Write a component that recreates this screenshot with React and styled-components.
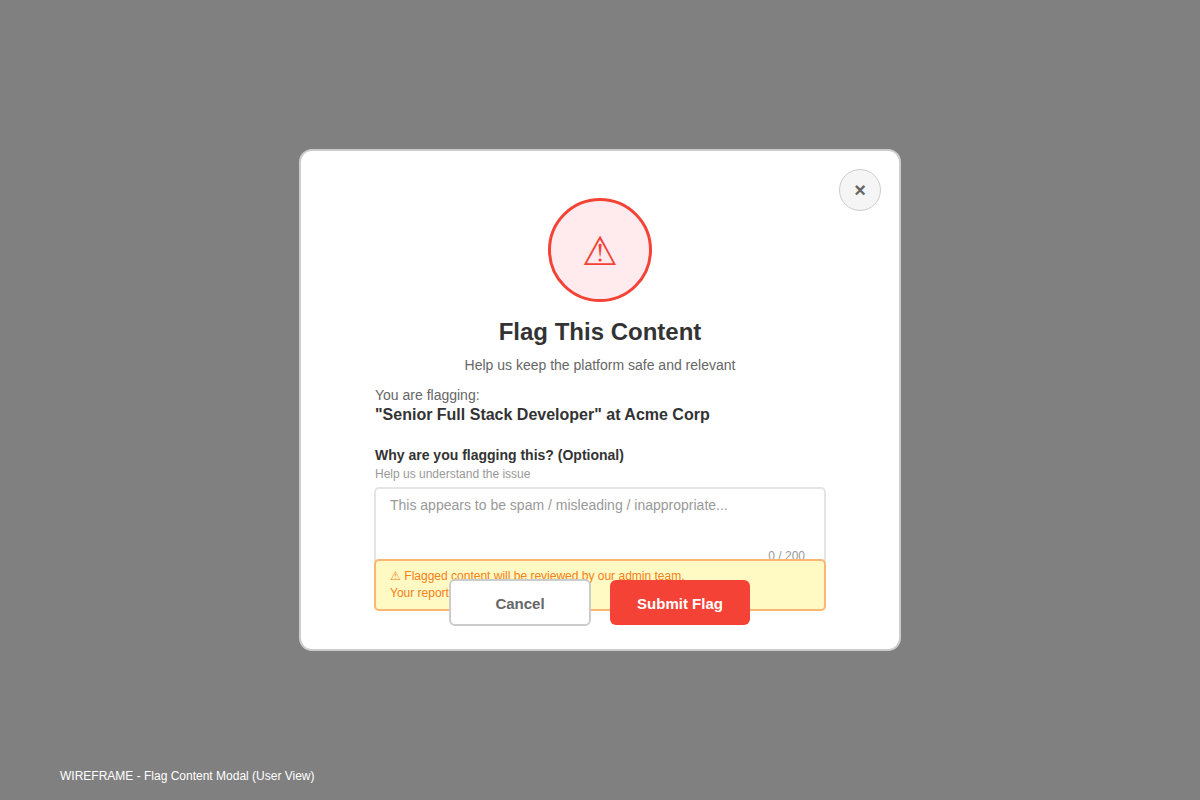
import React from "react";
import styled, { createGlobalStyle } from "styled-components";

const GlobalStyle = createGlobalStyle`
  *, *::before, *::after { box-sizing: border-box; }
  body { margin: 0; background: #808080; font-family: "Liberation Sans", Arial, sans-serif; }
  h1, h2, p { margin: 0; }
  button, textarea { font-family: inherit; }
`;

const Page = styled.div`
  min-height: 100vh;
  display: grid;
  grid-template-rows: 1fr auto 1fr;
  justify-items: center;
`;

const Modal = styled.main`
  grid-row: 2;
  position: relative;
  width: min(602px, 100%);
  padding: 47px 73px 23px;
  background: #fff;
  border: 2px solid #ccc;
  border-radius: 13px;
  display: flex;
  flex-direction: column;
`;

const CloseButton = styled.button`
  position: absolute;
  top: 18px;
  right: 18px;
  width: 42px;
  height: 42px;
  padding: 0;
  border: 1px solid #ccc;
  border-radius: 50%;
  background: #f5f5f5;
  color: #666;
  font-size: 20px;
  font-weight: 700;
  line-height: 40px;
  cursor: pointer;
`;

const AlertBadge = styled.div`
  align-self: center;
  width: 104px;
  height: 104px;
  padding-top: 2px;
  border: 3px solid #f44336;
  border-radius: 50%;
  background: #ffebee;
  color: #f44336;
  font-size: 40px;
  display: grid;
  place-items: center;
`;

const Title = styled.h1`
  margin-top: 16px;
  color: #333;
  font-size: 24px;
  line-height: 28px;
  text-align: center;
`;

const Subtitle = styled.p`
  margin-top: 11px;
  color: #666;
  font-size: 14px;
  line-height: 16px;
  text-align: center;
`;

const Section = styled.section`
  margin-top: ${({ $gap }) => $gap}px;
  padding: 0 1px;
`;

const Caption = styled.p`
  color: #666;
  font-size: 14px;
  line-height: 16px;
`;

const Subject = styled.h2`
  margin-top: 2px;
  color: #333;
  font-size: 16px;
  line-height: 20px;
`;

const Label = styled.label`
  display: block;
  color: #333;
  font-size: 14px;
  font-weight: 700;
  line-height: 16px;
`;

const Hint = styled.p`
  margin-top: 4px;
  color: #999;
  font-size: 12px;
  line-height: 14px;
`;

const Field = styled.div`
  position: relative;
  height: 72px;
  margin-top: 6px;
`;

const ReasonBox = styled.textarea`
  display: block;
  width: 100%;
  height: 82px;
  padding: 8px 14px;
  border: 2px solid #e5e5e5;
  border-radius: 5px;
  background: #fff;
  color: #333;
  font-size: 14px;
  line-height: 16px;
  resize: none;
  outline: none;
  &::placeholder { color: #999; opacity: 1; }
`;

const Counter = styled.span`
  position: absolute;
  right: 21px;
  bottom: -4px;
  color: #999;
  font-size: 12px;
  line-height: 14px;
`;

const Notice = styled.div`
  position: relative;
  height: 52px;
  padding: 7px 14px;
  border: 2px solid #fbb672;
  border-radius: 5px;
  background: #fff9c4;
  color: #f57f17;
  font-size: 12px;
  line-height: 17px;
`;

const Actions = styled.div`
  position: relative;
  display: flex;
  justify-content: center;
  align-items: center;
  gap: 19px;
  margin-top: -32px;
  padding-right: 1px;
`;

const Button = styled.button`
  width: ${({ $primary }) => ($primary ? 140 : 142)}px;
  height: ${({ $primary }) => ($primary ? 45 : 47)}px;
  padding: 2px 0 0;
  border: ${({ $primary }) => ($primary ? "0" : "2px solid #ccc")};
  border-radius: 6px;
  background: ${({ $primary }) => ($primary ? "#f44336" : "#fff")};
  color: ${({ $primary }) => ($primary ? "#fff" : "#666")};
  font-size: 15px;
  font-weight: 700;
  cursor: pointer;
`;

const Footer = styled.footer`
  grid-row: 3;
  align-self: end;
  justify-self: start;
  padding: 0 60px 17px;
  color: #fff;
  font-size: 12px;
  line-height: 14px;
`;

export default function App() {
  return (
    <>
      <GlobalStyle />
      <Page>
        <Modal role="dialog" aria-labelledby="title">
          <CloseButton type="button" aria-label="Close">×</CloseButton>
          <AlertBadge>⚠</AlertBadge>
          <Title id="title">Flag This Content</Title>
          <Subtitle>Help us keep the platform safe and relevant</Subtitle>
          <Section $gap={14}>
            <Caption>You are flagging:</Caption>
            <Subject>"Senior Full Stack Developer" at Acme Corp</Subject>
          </Section>
          <Section $gap={22}>
            <Label htmlFor="reason">Why are you flagging this? (Optional)</Label>
            <Hint id="hint">Help us understand the issue</Hint>
          </Section>
          <Field>
            <ReasonBox id="reason" aria-describedby="hint" maxLength={200} placeholder="This appears to be spam / misleading / inappropriate..." />
            <Counter>0 / 200</Counter>
          </Field>
          <Notice>
            <p>⚠ Flagged content will be reviewed by our admin team.</p>
            <p>Your report</p>
          </Notice>
          <Actions>
            <Button type="button">Cancel</Button>
            <Button type="button" $primary>Submit Flag</Button>
          </Actions>
        </Modal>
        <Footer>WIREFRAME - Flag Content Modal (User View)</Footer>
      </Page>
    </>
  );
}
